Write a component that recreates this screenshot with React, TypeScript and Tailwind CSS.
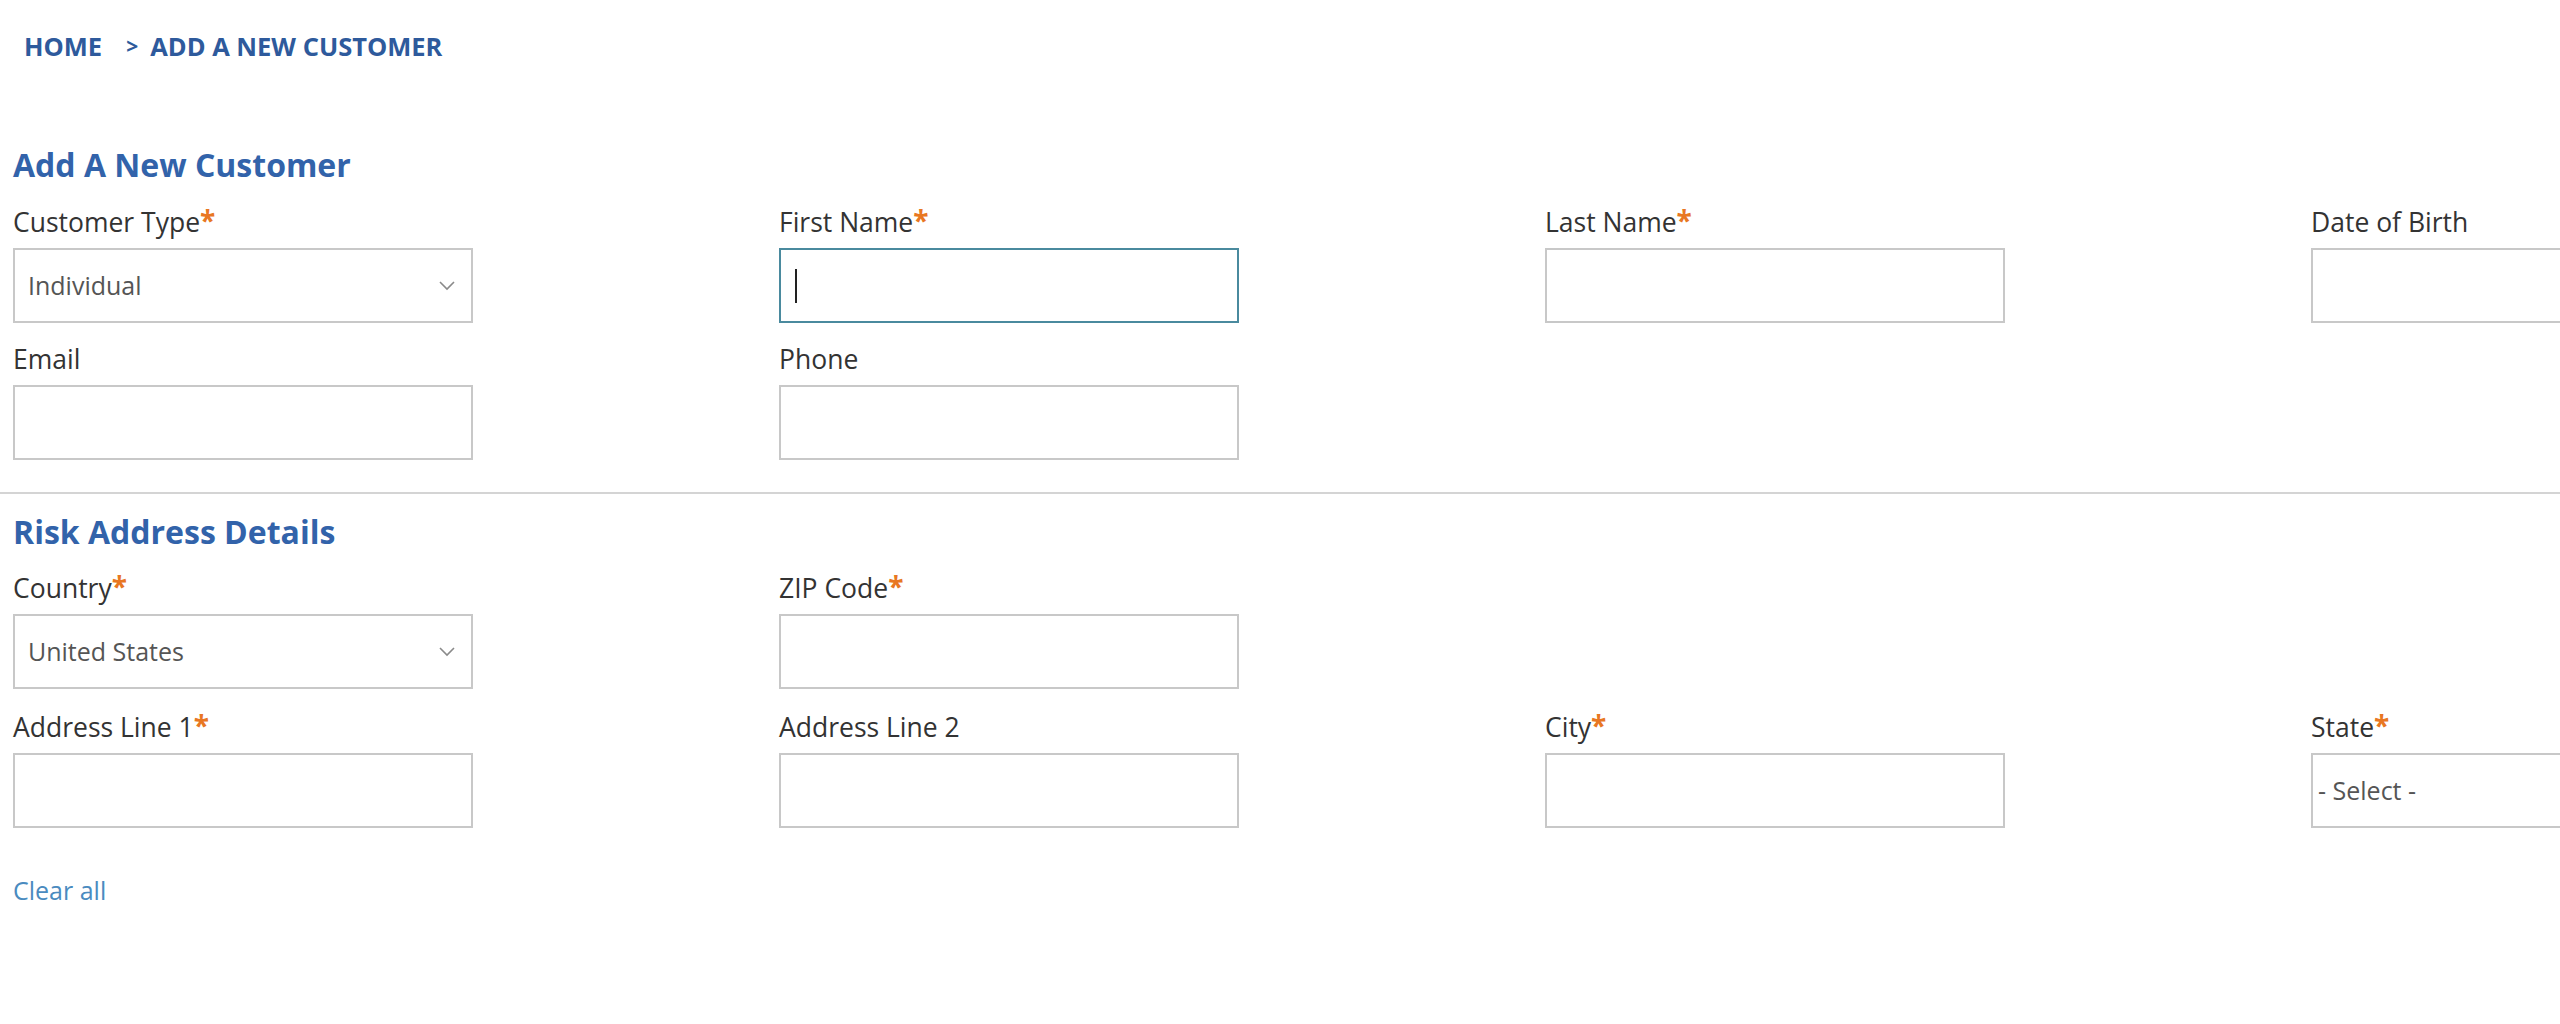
import React from "react";

const Star = () => <span className="text-[#e87722] font-bold text-[28px] leading-none align-top relative top-[-1px]">*</span>;

function Label({ text, req }: { text: string; req?: boolean }) {
  return (
    <div className="h-[30px] leading-[30px] text-[26.5px] text-[#333333] whitespace-nowrap">
      {text}
      {req && <Star />}
    </div>
  );
}

function Box({ children, focused }: { children?: React.ReactNode; focused?: boolean }) {
  return (
    <div
      className={
        "mt-[11px] h-[75px] w-[460px] bg-white flex items-center px-[13px] text-[25px] text-[#555555] " +
        (focused ? "border-2 border-[#4a8a9e]" : "border-2 border-[#c8c8c8]")
      }
    >
      {children}
    </div>
  );
}

function Chevron() {
  return (
    <svg width="16" height="10" viewBox="0 0 16 10" className="ml-auto mr-[3px]">
      <path d="M1 1 L8 8 L15 1" fill="none" stroke="#8a8a8a" strokeWidth="1.6" />
    </svg>
  );
}

function Field({ label, req, children, focused }: { label: string; req?: boolean; children?: React.ReactNode; focused?: boolean }) {
  return (
    <div className="w-[460px]">
      <Label text={label} req={req} />
      <Box focused={focused}>{children}</Box>
    </div>
  );
}

export default function App() {
  return (
    <div className="w-full h-[1024px] bg-white overflow-hidden" style={{ fontFamily: '"Open Sans", "Liberation Sans", sans-serif' }}>
      <div className="pt-[30px] pl-[24px] h-[62px] flex items-center text-[25.5px] font-bold text-[#2e5a9c] leading-[32px] whitespace-nowrap">
        <span>HOME</span>
        <span className="ml-[24px] mr-[12px] text-[21px]">&gt;</span>
        <span>ADD A NEW CUSTOMER</span>
      </div>

      <div className="pl-[13px] mt-[85px] h-[36px] leading-[36px] text-[32px] font-bold text-[#3263aa] whitespace-nowrap">
        Add A New Customer
      </div>

      <div className="pl-[13px] mt-[24px] grid grid-cols-[460px_460px_460px_460px] gap-x-[306px] gap-y-[21px]">
        <Field label="Customer Type" req>
          <span>Individual</span>
          <Chevron />
        </Field>
        <Field label="First Name" req focused>
          <span className="w-[2px] h-[34px] bg-[#222] ml-[1px]" />
        </Field>
        <Field label="Last Name" req />
        <Field label="Date of Birth" />
        <Field label="Email" />
        <Field label="Phone" />
      </div>

      <div className="mt-[32px] h-[2px] w-full bg-[#d4d4d4]" />

      <div className="pl-[13px] mt-[20px] h-[36px] leading-[36px] text-[32px] font-bold text-[#3263aa] whitespace-nowrap">
        Risk Address Details
      </div>

      <div className="pl-[13px] mt-[23px] grid grid-cols-[460px_460px_460px_460px] gap-x-[306px] gap-y-[23px]">
        <Field label="Country" req>
          <span>United States</span>
          <Chevron />
        </Field>
        <Field label="ZIP Code" req />
        <div />
        <div />
        <Field label="Address Line 1" req />
        <Field label="Address Line 2" />
        <Field label="City" req />
        <Field label="State" req>
          <span className="-ml-[8px]">- Select -</span>
        </Field>
      </div>

      <div className="pl-[13px] mt-[47px] h-[30px] leading-[30px] text-[25px] text-[#4a8bbf] whitespace-nowrap">
        Clear all
      </div>
    </div>
  );
}
